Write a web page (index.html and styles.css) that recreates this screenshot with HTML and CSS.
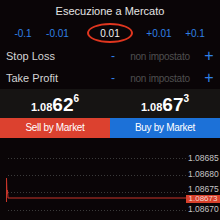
FILE: index.html
```html
<!DOCTYPE html>
<html lang="it">
<head>
<meta charset="utf-8">
<link rel="stylesheet" href="styles.css">
</head>
<body>
<div class="screen">
  <div class="title">Esecuzione a Mercato</div>
  <div class="steps">
    <span class="step s1">-0.1</span>
    <span class="step s2">-0.01</span>
    <span class="step current">0.01</span>
    <span class="step s4">+0.01</span>
    <span class="step s5">+0.1</span>
  </div>
  <div class="param">
    <span class="label">Stop Loss</span>
    <span class="minus">-</span>
    <span class="value">non impostato</span>
    <span class="plus">+</span>
  </div>
  <div class="param">
    <span class="label">Take Profit</span>
    <span class="minus">-</span>
    <span class="value">non impostato</span>
    <span class="plus">+</span>
  </div>
  <div class="quotes">
    <div class="quote"><span class="q-small">1.08</span><span class="q-big">62</span><span class="q-sup">6</span></div>
    <div class="quote"><span class="q-small">1.08</span><span class="q-big">67</span><span class="q-sup">3</span></div>
  </div>
  <div class="actions">
    <div class="btn sell">Sell by Market</div>
    <div class="btn buy">Buy by Market</div>
  </div>
  <div class="chart">
    <svg class="chart-svg" width="220" height="82" viewBox="0 0 220 82">
      <g stroke="#3a3a3a" stroke-width="1" stroke-dasharray="1 2">
        <line x1="8" y1="20.5" x2="186" y2="20.5"/>
        <line x1="8" y1="37.5" x2="186" y2="37.5"/>
        <line x1="8" y1="54.5" x2="186" y2="54.5"/>
        <line x1="8" y1="72.5" x2="186" y2="72.5"/>
      </g>
      <polyline fill="none" stroke="#c8352a" stroke-width="1" points="6.5,64 6.5,40 7,56 7.5,52 8,60 9,60 186,60"/>
    </svg>
    <span class="axis a1">1.08685</span>
    <span class="axis a2">1.08680</span>
    <span class="axis a3">1.08675</span>
    <span class="axis-current">1.08673</span>
    <span class="axis a4">1.08670</span>
  </div>
</div>
</body>
</html>
```
FILE: styles.css
```css
html, body {
  margin: 0;
  padding: 0;
  background: #0a0507;
}
body {
  font-family: "Liberation Sans", Arial, Helvetica, sans-serif;
  color: #e6e6e6;
}
.screen {
  width: 220px;
  height: 220px;
  overflow: hidden;
  background: #0a0507;
}
.title {
  height: 22px;
  line-height: 22px;
  text-align: center;
  font-size: 11px;
  color: #e4e4e4;
}
.steps {
  height: 23px;
  display: flex;
  align-items: center;
  padding-left: 8px;
  font-size: 10px;
  color: #2f80e6;
}
.step {
  width: 30px;
  line-height: 12px;
  text-align: center;
  flex: none;
}
.s2 { margin-left: 4.5px; }
.current {
  width: 46px;
  margin-left: 14.5px;
  color: #f2f2f2;
  position: relative;
}
.current::after {
  content: "";
  position: absolute;
  left: 0;
  top: -5px;
  width: 46px;
  height: 20px;
  box-sizing: border-box;
  border: 2px solid #e0361f;
  border-radius: 50%;
}
.s4 { margin-left: 11px; }
.s5 { margin-left: 6px; }
.param {
  height: 22px;
  display: grid;
  grid-template-columns: 104px 18px 76px 22px;
  align-items: center;
}
.label {
  padding-left: 6px;
  font-size: 11px;
  color: #d4d4d4;
}
.minus {
  text-align: center;
  font-size: 12px;
  color: #2f80e6;
}
.value {
  text-align: center;
  font-size: 10px;
  letter-spacing: -0.25px;
  color: #4f4f4f;
}
.plus {
  text-align: center;
  font-size: 16px;
  line-height: 16px;
  color: #2f80e6;
}
.quotes {
  height: 29px;
  box-sizing: border-box;
  padding-top: 2px;
  display: grid;
  grid-template-columns: 1fr 1fr;
  background: #161413;
}
.quote {
  text-align: center;
  font-size: 19px;
  line-height: 27px;
  font-weight: bold;
  color: #ffffff;
}
.q-small {
  font-size: 11px;
  line-height: 11px;
}
.q-big {
  font-size: 19px;
}
.q-sup {
  font-size: 10px;
  line-height: 10px;
  vertical-align: 9px;
}
.actions {
  height: 20px;
  display: grid;
  grid-template-columns: 1fr 1fr;
}
.btn {
  text-align: center;
  line-height: 20px;
  font-size: 10px;
  letter-spacing: -0.3px;
  color: #ffffff;
}
.sell { background: #dc412f; }
.buy { background: #1c71d8; }
.chart {
  position: relative;
  height: 82px;
}
.chart-svg {
  display: block;
}
.axis {
  position: absolute;
  left: 188px;
  font-size: 8.5px;
  line-height: 10px;
  color: #c4c4c4;
}
.a1 { top: 15px; }
.a2 { top: 31px; }
.a3 { top: 46px; }
.a4 { top: 66px; }
.axis-current {
  position: absolute;
  left: 186px;
  top: 56.5px;
  width: 34px;
  height: 8.5px;
  line-height: 8.5px;
  text-align: center;
  font-size: 8px;
  background: #d8402b;
  color: #f4d6d0;
}
```
